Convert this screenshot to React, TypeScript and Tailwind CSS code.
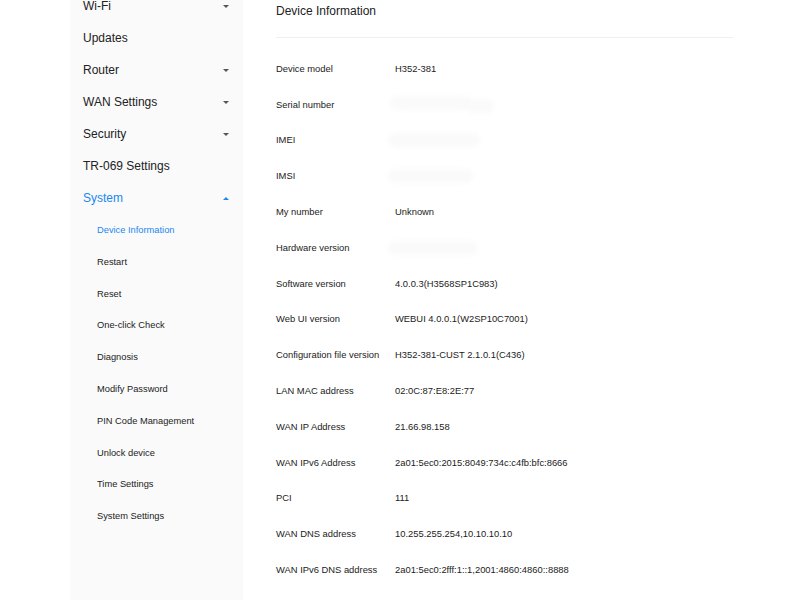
import React from "react";

const mainItems: { label: string; arrow?: "down" | "up"; active?: boolean }[] = [
  { label: "Wi-Fi", arrow: "down" },
  { label: "Updates" },
  { label: "Router", arrow: "down" },
  { label: "WAN Settings", arrow: "down" },
  { label: "Security", arrow: "down" },
  { label: "TR-069 Settings" },
  { label: "System", arrow: "up", active: true },
];

const subItems = [
  "Device Information",
  "Restart",
  "Reset",
  "One-click Check",
  "Diagnosis",
  "Modify Password",
  "PIN Code Management",
  "Unlock device",
  "Time Settings",
  "System Settings",
];

type Row = { label: string; value?: string; blur?: "serial" | "imei" | "imsi" | "hw" };

const rows: Row[] = [
  { label: "Device model", value: "H352-381" },
  { label: "Serial number", blur: "serial" },
  { label: "IMEI", blur: "imei" },
  { label: "IMSI", blur: "imsi" },
  { label: "My number", value: "Unknown" },
  { label: "Hardware version", blur: "hw" },
  { label: "Software version", value: "4.0.0.3(H3568SP1C983)" },
  { label: "Web UI version", value: "WEBUI 4.0.0.1(W2SP10C7001)" },
  { label: "Configuration file version", value: "H352-381-CUST 2.1.0.1(C436)" },
  { label: "LAN MAC address", value: "02:0C:87:E8:2E:77" },
  { label: "WAN IP Address", value: "21.66.98.158" },
  { label: "WAN IPv6 Address", value: "2a01:5ec0:2015:8049:734c:c4fb:bfc:8666" },
  { label: "PCI", value: "111" },
  { label: "WAN DNS address", value: "10.255.255.254,10.10.10.10" },
  { label: "WAN IPv6 DNS address", value: "2a01:5ec0:2fff:1::1,2001:4860:4860::8888" },
];

function Blur({ kind }: { kind: NonNullable<Row["blur"]> }) {
  if (kind === "serial") {
    return (
      <div className="flex items-start -ml-[5px]">
        <div className="h-[14px] w-[82px] rounded-full bg-[#fafafa] blur-[2px]" />
        <div className="mt-[3px] -ml-[4px] h-[14px] w-[26px] rounded-full bg-[#fafafa] blur-[2px]" />
      </div>
    );
  }
  const w = kind === "imei" ? "w-[92px]" : kind === "imsi" ? "w-[85px]" : "w-[90px]";
  return <div className={`-ml-[7px] h-[14px] ${w} rounded-full bg-[#fafafa] blur-[2px]`} />;
}

export default function App() {
  return (
    <div
      className="flex h-[600px] w-[800px] overflow-hidden bg-white text-[#333]"
      style={{ fontFamily: '"Liberation Sans", Arial, sans-serif' }}
    >
      <div className="ml-[70px] w-[173px] shrink-0 bg-[#fafafa]">
        <div className="-mt-[10px]">
          {mainItems.map((it) => (
            <div
              key={it.label}
              className={`flex h-8 items-center justify-between pl-[13px] pr-[14px] text-[12px] ${
                it.active ? "text-[#1a88f2]" : "text-[#222]"
              }`}
            >
              <span>{it.label}</span>
              {it.arrow === "down" && (
                <span className="h-0 w-0 border-x-[3px] border-t-[3px] border-x-transparent border-t-[#555]" />
              )}
              {it.arrow === "up" && (
                <span className="h-0 w-0 border-x-[3px] border-b-[3px] border-x-transparent border-b-[#1a88f2]" />
              )}
            </div>
          ))}
          <div className="mt-px">
            {subItems.map((s, i) => (
              <div
                key={s}
                className={`flex h-[31.8px] items-center pl-[27px] text-[9.3px] ${
                  i === 0 ? "text-[#1a88f2]" : "text-[#222]"
                }`}
              >
                {s}
              </div>
            ))}
          </div>
        </div>
      </div>
      <div className="flex-1 pl-[33px] pr-[67px] pt-[3px]">
        <div className="h-4 text-[12px] leading-4 text-[#222]">Device Information</div>
        <div className="mt-[18px] h-px bg-[#efefef]" />
        <div className="mt-[13px]">
          {rows.map((r) => (
            <div key={r.label} className="flex h-[35.8px] items-center text-[9.4px] text-[#222]">
              <div className="w-[119px] shrink-0">{r.label}</div>
              <div>{r.blur ? <Blur kind={r.blur} /> : r.value}</div>
            </div>
          ))}
        </div>
      </div>
    </div>
  );
}
